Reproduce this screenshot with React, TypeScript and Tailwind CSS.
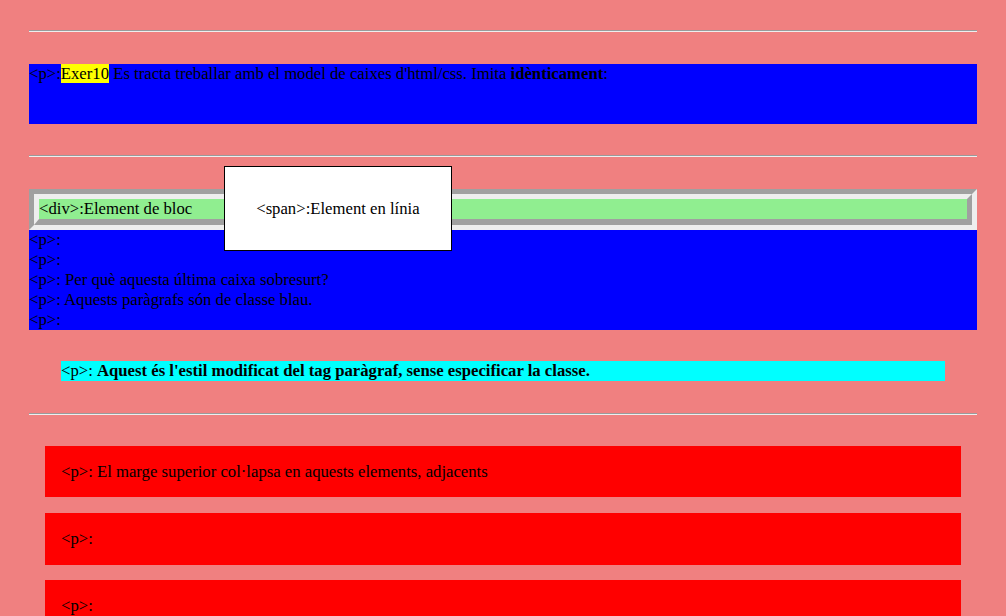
export default function App() {
  return (
    <div className="min-h-screen bg-[#f08080] px-[29px] pt-[30px] font-['Liberation_Serif',serif] text-[16.7px] leading-[20px] text-black">
      <div className="border-t border-b border-t-[#9a9a9a] border-b-[#eeeeee]" />

      {/* Intro */}
      <p className="mt-[32px] h-[60px] bg-[#0000ff]">
        &lt;p&gt;:<span className="bg-[#ffff00]">Exer10</span> Es tracta treballar amb el model de caixes d'html/css. Imita{' '}
        <b>idènticament</b>:
      </p>

      <div className="mt-[31px] border-t border-b border-t-[#9a9a9a] border-b-[#eeeeee]" />

      {/* Div groove box */}
      <div className="mt-[32px] border-[5px] border-t-[#a0a0a0] border-l-[#a0a0a0] border-b-[#eeeeee] border-r-[#eeeeee]">
        <div className="border-[5px] border-b-[6px] border-t-[#eeeeee] border-l-[#eeeeee] border-b-[#a0a0a0] border-r-[#a0a0a0]">
          <div className="h-[20px] bg-[#90ee90]">
            &lt;div&gt;:Element de bloc
            <span className="ml-[32px] border border-black bg-white px-[31px] py-[32px]">
              &lt;span&gt;:Element en línia
            </span>
          </div>
        </div>
      </div>

      {/* Blue paragraphs */}
      <p className="bg-[#0000ff]">&lt;p&gt;:</p>
      <p className="bg-[#0000ff]">&lt;p&gt;:</p>
      <p className="bg-[#0000ff]">&lt;p&gt;: Per què aquesta última caixa sobresurt?</p>
      <p className="bg-[#0000ff]">&lt;p&gt;: Aquests paràgrafs són de classe blau.</p>
      <p className="bg-[#0000ff]">&lt;p&gt;:</p>

      <p className="mx-[32px] mt-[31px] bg-[#00ffff]">
        &lt;p&gt;: <b>Aquest és l'estil modificat del tag paràgraf, sense especificar la classe.</b>
      </p>

      <div className="mt-[32px] border-t border-b border-t-[#9a9a9a] border-b-[#eeeeee]" />

      {/* Collapsing margins */}
      <div className="mt-[31px] flex flex-col px-[16px]">
        <p className="bg-[#ff0000] p-[16px] h-[51px]">&lt;p&gt;: El marge superior col·lapsa en aquests elements, adjacents</p>
        <p className="mt-[16px] bg-[#ff0000] p-[16px] h-[52px]">&lt;p&gt;:</p>
        <p className="mt-[15px] bg-[#ff0000] p-[16px]">&lt;p&gt;:</p>
      </div>
    </div>
  )
}
